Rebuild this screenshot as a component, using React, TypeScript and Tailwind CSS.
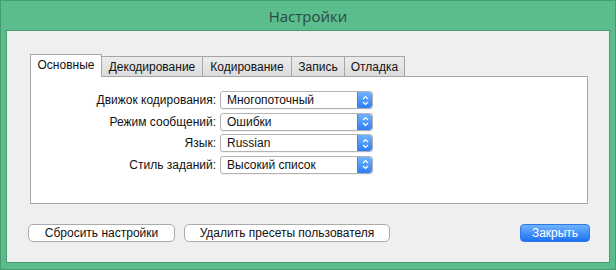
import React from 'react'

const font = "font-['Liberation_Sans','Noto_Sans',sans-serif]"

const tabs = [
  { label: 'Основные', w: 'w-[72px]', active: true },
  { label: 'Декодирование', w: 'w-[102px]' },
  { label: 'Кодирование', w: 'w-[90px]' },
  { label: 'Запись', w: 'w-[54px]' },
  { label: 'Отладка', w: 'w-[61px]' },
]

const fields = [
  { label: 'Движок кодирования:', value: 'Многопоточный' },
  { label: 'Режим сообщений:', value: 'Ошибки' },
  { label: 'Язык:', value: 'Russian' },
  { label: 'Стиль заданий:', value: 'Высокий список' },
]

const Stepper = () => (
  <div className="flex h-full w-[15px] items-center justify-center rounded-r-[3px] border-l border-[#3f86ea] bg-gradient-to-b from-[#70b2fc] to-[#2c7ef4]">
    <svg width="7" height="11" viewBox="0 0 7 11" fill="none">
      <path d="M1 4 L3.5 1.5 L6 4" stroke="white" strokeWidth="1.2" />
      <path d="M1 7 L3.5 9.5 L6 7" stroke="white" strokeWidth="1.2" />
    </svg>
  </div>
)

const Select = ({ value }: { value: string }) => (
  <div className="flex h-[18px] w-[153px] items-center overflow-hidden rounded-[3px] border border-[#b3b3b3] bg-white shadow-[0_1px_0_rgba(0,0,0,0.05)]">
    <span className="flex-1 pl-[6px] text-[12px] leading-none text-[#111]">{value}</span>
    <Stepper />
  </div>
)

export default function App() {
  return (
    <div className={`flex h-[270px] w-[616px] flex-col border border-[#469b70] bg-[#5bbc8c] ${font}`}>
      <div className="flex h-[29px] items-center justify-center pt-[1px] text-[15px] text-[#2a4a40] font-['Open_Sans','Noto_Sans',sans-serif]">
        Настройки
      </div>
      <div className="mx-[5px] flex h-[233px] flex-col border border-[#4b9c75] bg-[#efefef] pl-[21px] pr-[19px] pt-[23px]">
        <div className="mx-[2px]">
          <div className="flex h-[22px] items-end">
            {tabs.map((t, i) => (
              <div
                key={t.label}
                className={`${t.w} ${i > 0 ? '-ml-px' : ''} flex items-center justify-center border border-b-0 border-[#a6a6a6] text-[12px] leading-none text-[#111] ${
                  t.active
                    ? 'relative z-10 h-[23px] -mb-px bg-white pb-[2px]'
                    : 'h-[20px] bg-gradient-to-b from-[#ececec] to-[#dcdcdc]'
                }`}
              >
                {t.label}
              </div>
            ))}
          </div>
          <div className="h-[128px] border border-[#a6a6a6] bg-white pt-[14px]">
            <div className="grid grid-cols-[185px_153px] gap-x-[4px] gap-y-[3.5px]">
              {fields.map((f) => (
                <React.Fragment key={f.label}>
                  <div className="flex h-[18px] items-center justify-end text-[12px] text-[#111]">{f.label}</div>
                  <Select value={f.value} />
                </React.Fragment>
              ))}
            </div>
          </div>
        </div>
        <div className="mt-[20px] flex items-center">
          <button className="h-[18px] w-[147px] rounded-[5px] border border-[#ababab] bg-white text-[12px] leading-none text-[#111]">
            Сбросить настройки
          </button>
          <button className="ml-[9px] h-[18px] w-[206px] rounded-[5px] border border-[#ababab] bg-white text-[12px] leading-none text-[#111]">
            Удалить пресеты пользователя
          </button>
          <button className="ml-auto h-[18px] w-[70px] rounded-[4px] border border-[#2d78e6] bg-gradient-to-b from-[#6db2fd] to-[#1d70f5] text-[12px] leading-none text-white">
            Закрыть
          </button>
        </div>
      </div>
    </div>
  )
}
